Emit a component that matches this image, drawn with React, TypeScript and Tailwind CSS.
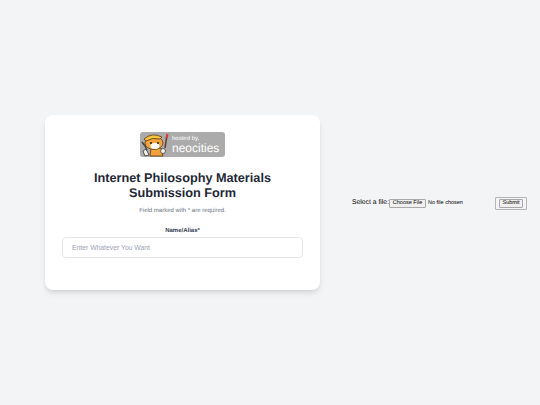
export default function App() {
  const f = { fontFamily: '"Liberation Sans", Arial, sans-serif' };
  return (
    <div className="w-[540px] h-[405px] overflow-hidden bg-[#f3f4f6] flex items-center [text-rendering:geometricPrecision]" style={f}>
      <div className="w-[275px] h-[175px] ml-[45px] shrink-0 bg-white rounded-lg shadow-md px-[17px] pt-[17px] flex flex-col items-center">
        <div className="w-[85px] h-[25px] rounded-[3px] bg-[#ababab] flex items-center overflow-hidden">
          <svg width="32" height="25" viewBox="0 0 32 25" className="shrink-0">
            <path d="M9 23 L5 24 L3 19 L6 17 Z" fill="#f4f0e6" stroke="#333" strokeWidth="0.8" />
            <path d="M2 10 L5 14 L7 18" stroke="#444" strokeWidth="1.5" fill="none" />
            <path d="M11 16 L21 16 L23 24 L10 24 Z" fill="#f2a33c" stroke="#5a3a14" strokeWidth="0.8" />
            <ellipse cx="14" cy="11" rx="9" ry="6.5" fill="#f2a33c" stroke="#5a3a14" strokeWidth="0.8" />
            <ellipse cx="15" cy="14" rx="4.5" ry="3" fill="#fff" />
            <path d="M4 7 Q12 0 22 5 L20 7 Q12 5 6 9 Z" fill="#f6c544" stroke="#5a3a14" strokeWidth="0.8" />
            <circle cx="11" cy="11" r="1" fill="#222" />
            <circle cx="18" cy="11" r="1" fill="#222" />
            <path d="M27 3 L25 16" stroke="#6b3b2a" strokeWidth="1.6" />
            <path d="M27.5 2 L26.5 6" stroke="#d83a3a" strokeWidth="2" />
            <circle cx="23" cy="19" r="2.5" fill="#f4f0e6" stroke="#333" strokeWidth="0.7" />
          </svg>
          <div className="flex flex-col text-white">
            <span className="text-[6px] leading-[7px]">hosted by,</span>
            <span className="text-[12px] leading-[11px]">neocities</span>
          </div>
        </div>
        <h1 className="mt-[14px] text-[12.7px] leading-[15px] font-bold text-[#1f2937] text-center whitespace-nowrap">
          Internet Philosophy Materials<br />Submission Form
        </h1>
        <p className="mt-[5px] text-[6px] leading-[10px] text-[#6b7280]">Field marked with * are required.</p>
        <label className="mt-[10px] text-[6px] leading-[10px] font-bold text-[#374151]">Name/Alias*</label>
        <input
          readOnly
          placeholder="Enter Whatever You Want"
          className="mt-[1px] w-full h-[21px] border border-[#e5e7eb] rounded-[4px] px-[9px] text-[6.8px] placeholder:text-[#9ca3af] outline-none"
        />
      </div>
      <div className="ml-[32px] mt-[1px] flex items-center text-[6.8px] text-black whitespace-nowrap">
        <span>Select a file:</span>
        <span className="w-[37px] h-[9px] flex items-center justify-center bg-[#efefef] border border-[#a8a8a8] rounded-[1px] text-[5.5px]">Choose File</span>
        <span className="ml-[2px] text-[5.5px] w-[67px]">No file chosen</span>
        <span className="px-[3px] py-[1px] border border-[#b5b5b5] rounded-[1px]">
          <span className="flex items-center justify-center w-[24px] h-[9px] bg-[#efefef] border border-[#a8a8a8] rounded-[1px] text-[5.5px]">Submit</span>
        </span>
      </div>
    </div>
  );
}
